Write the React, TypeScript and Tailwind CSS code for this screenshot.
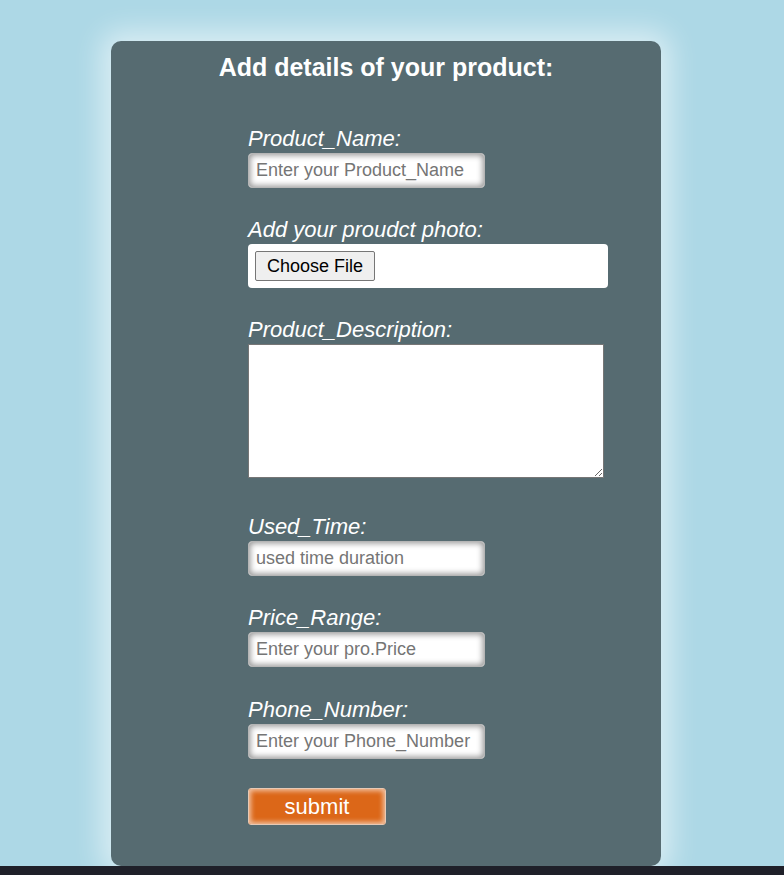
import React from 'react';

const labelCls = "block text-[22px] leading-[23px] italic text-white";
const inputCls =
  "mt-[3px] block w-[237px] h-[35px] rounded-[4px] border border-[#b5b5b5] bg-white px-[7px] text-[18px] text-[#333] placeholder:text-[#757575] shadow-[inset_0_0_6px_1px_rgba(0,0,0,0.45)] outline-none";

const App: React.FC = () => {
  return (
    <div className="w-[784px] h-[875px] bg-[#add8e6] flex flex-col font-['Liberation_Sans',Arial,sans-serif] overflow-hidden">
      <div className="mt-[41px] ml-[111px] w-[550px] h-[825px] shrink-0 rounded-[10px] bg-[#566b71] pt-[12px] shadow-[0_0_28px_10px_rgba(255,255,255,0.55)]">
        <h2 className="text-center text-[25px] leading-[28px] font-bold text-white">
          Add details of your product:
        </h2>

        <form className="ml-[137px] mt-[46px] flex flex-col items-start" onSubmit={(e) => e.preventDefault()}>
          <label className={labelCls}>Product_Name:</label>
          <input className={inputCls} placeholder="Enter your Product_Name" />

          <label className={labelCls + " mt-[30px]"}>Add your proudct photo:</label>
          <div className="mt-[3px] w-[360px] h-[44px] shrink-0 rounded-[4px] bg-white p-[7px]">
            <button
              type="button"
              className="h-[30px] px-[11px] rounded-[2px] border border-[#767676] bg-[#efefef] text-[18px] leading-[28px] text-black"
            >
              Choose File
            </button>
          </div>

          <label className={labelCls + " mt-[30px]"}>Product_Description:</label>
          <textarea className="mt-[3px] block w-[356px] h-[134px] shrink-0 border border-[#767676] bg-white resize outline-none" />

          <label className={labelCls + " mt-[37px]"}>Used_Time:</label>
          <input className={inputCls} placeholder="used time duration" />

          <label className={labelCls + " mt-[30px]"}>Price_Range:</label>
          <input className={inputCls} placeholder="Enter your pro.Price" />

          <label className={labelCls + " mt-[31px]"}>Phone_Number:</label>
          <input className={inputCls} placeholder="Enter your Phone_Number" />

          <button
            type="submit"
            className="mt-[29px] w-[138px] h-[37px] rounded-[3px] border border-[#e8c9b4] bg-[#dc6718] text-[22px] leading-[24px] text-white shadow-[inset_0_0_5px_2px_rgba(255,255,255,0.6)]"
          >
            submit
          </button>
        </form>
      </div>
      <div className="mt-auto h-[9px] w-full shrink-0 bg-[#1f2029]" />
    </div>
  );
};

export default App;
